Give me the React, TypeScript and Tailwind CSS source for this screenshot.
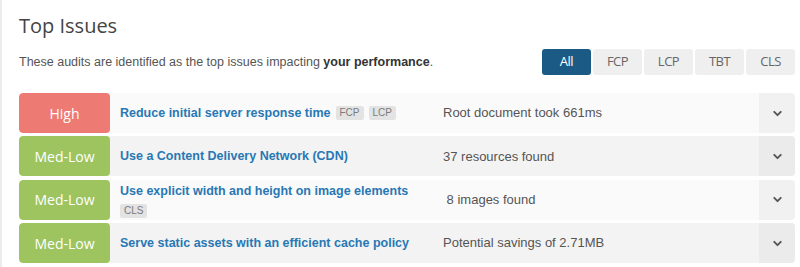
import { ChevronDown } from "lucide-react";

type Issue = {
  level: "High" | "Med-Low";
  title: string;
  tags: string[];
  tagsBelow?: boolean;
  detail: string;
};

const issues: Issue[] = [
  { level: "High", title: "Reduce initial server response time", tags: ["FCP", "LCP"], detail: "Root document took 661ms" },
  { level: "Med-Low", title: "Use a Content Delivery Network (CDN)", tags: [], detail: "37 resources found" },
  { level: "Med-Low", title: "Use explicit width and height on image elements", tags: ["CLS"], tagsBelow: true, detail: "\u00a08 images found" },
  { level: "Med-Low", title: "Serve static assets with an efficient cache policy", tags: [], detail: "Potential savings of 2.71MB" },
];

const tabs = ["All", "FCP", "LCP", "TBT", "CLS"];

function Tag({ label }: { label: string }) {
  return (
    <span className="inline-flex h-[14px] items-center rounded-[2px] bg-[#e3e3e3] px-[4px] text-[10px] font-normal leading-none text-[#7a7a7a]">
      {label}
    </span>
  );
}

function IssueRow({ issue, index }: { issue: Issue; index: number }) {
  const odd = index % 2 === 1;
  return (
    <div className={`flex h-[40px] shrink-0 overflow-hidden rounded-[4px] ${odd ? "bg-[#f3f3f3]" : "bg-[#fafafa]"}`}>
      <div
        className={`flex w-[91px] shrink-0 items-center justify-center rounded-[4px] text-[14px] text-white font-['Open_Sans',sans-serif] ${
          issue.level === "High" ? "bg-[#ee7a74]" : "bg-[#9dc45f]"
        }`}
      >
        {issue.level}
      </div>
      <div className="flex w-[333px] shrink-0 flex-col justify-center pl-[10px]">
        <div className="flex items-center gap-[5px]">
          <span className="text-[12.5px] font-bold text-[#2878b4]">{issue.title}</span>
          {!issue.tagsBelow && issue.tags.map((t) => <Tag key={t} label={t} />)}
        </div>
        {issue.tagsBelow && (
          <div className="mt-[3px] flex gap-[5px]">
            {issue.tags.map((t) => (
              <Tag key={t} label={t} />
            ))}
          </div>
        )}
      </div>
      <div className="flex flex-1 items-center text-[13px] text-[#555]">{issue.detail}</div>
      <div className={`flex w-[36px] shrink-0 items-center justify-center ${odd ? "bg-[#ebebeb]" : "bg-[#f1f1f1]"}`}>
        <ChevronDown size={13} strokeWidth={3.5} className="text-[#555]" />
      </div>
    </div>
  );
}

export default function App() {
  return (
    <main className="h-[267px] w-[800px] overflow-hidden border-l-2 border-[#ececec] bg-white font-['Liberation_Sans',Arial,sans-serif]">
      <div className="pl-[17px] pr-[5px] pt-[12px]">
        <h2 className="text-[20px] leading-[28px] text-[#444] font-['Open_Sans',sans-serif]">Top Issues</h2>
        <div className="mt-[9px] flex items-center justify-between">
          <p className="text-[12.5px] text-[#555]">
            These audits are identified as the top issues impacting <strong className="text-[#333]">your performance</strong>.
          </p>
          <div className="flex gap-[2px]">
            {tabs.map((t) => (
              <button
                key={t}
                className={`h-[26px] w-[49px] rounded-[3px] text-[13px] font-['Open_Sans',sans-serif] tracking-[-0.5px] ${
                  t === "All" ? "bg-[#1c5a86] text-white" : "bg-[#efefef] text-[#666]"
                }`}
              >
                {t}
              </button>
            ))}
          </div>
        </div>
        <div className="mt-[18px] flex flex-col gap-[3.4px]">
          {issues.map((issue, i) => (
            <IssueRow key={i} issue={issue} index={i} />
          ))}
          <div className="flex h-[40px] shrink-0 overflow-hidden rounded-[4px] bg-[#fafafa]">
            <div className="w-[91px] shrink-0 rounded-[4px] bg-[#9dc45f]" />
          </div>
        </div>
      </div>
    </main>
  );
}
